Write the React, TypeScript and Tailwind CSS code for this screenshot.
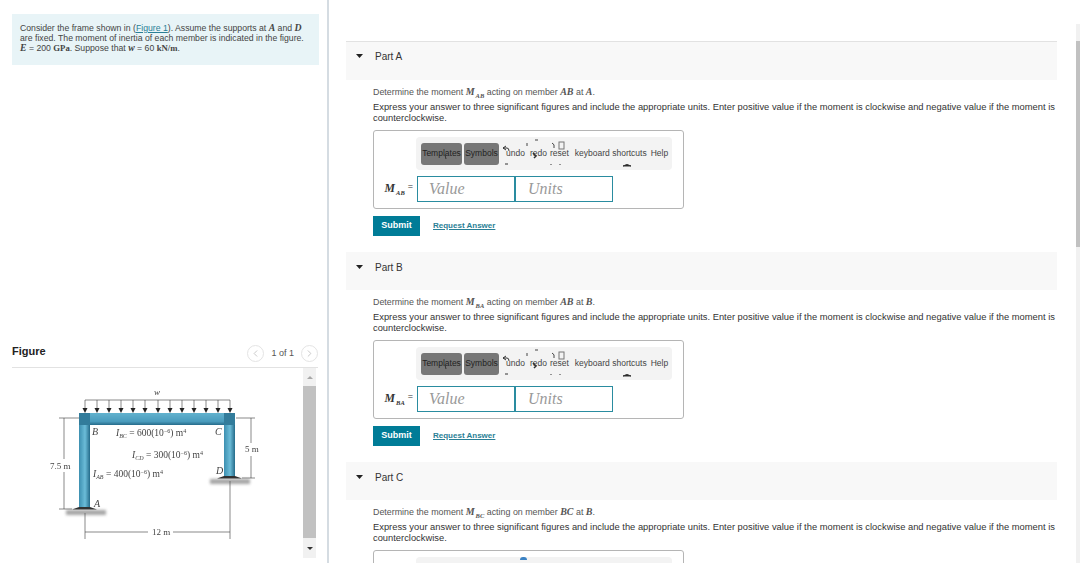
import { ChevronLeft, ChevronRight } from "lucide-react";
import type { ReactNode } from "react";

const Math = ({ children }: { children: ReactNode }) => (
  <span className="font-['Liberation_Serif',serif] text-[1.12em] font-bold italic">{children}</span>
);

const Moment = ({ sub }: { sub: string }) => (
  <Math>
    M<sub className="ml-[1px] text-[6.5px] leading-none align-[-1px]">{sub}</sub>
  </Math>
);

const Caret = () => (
  <svg width="7" height="4" viewBox="0 0 7 4" className="shrink-0">
    <path d="M0 0h7L3.5 4z" fill="#222" />
  </svg>
);

const Toolbar = () => (
  <div className="relative ml-[42px] flex h-[33px] w-[256px] items-center whitespace-nowrap rounded-[4px] bg-[#f3f3f3] pl-[5px] text-[8.5px] text-[#444]">
    <span className="flex h-[22px] w-[41px] items-center justify-center rounded-[3px] bg-[#777] text-[#222]">Templates</span>
    <span className="ml-[2px] flex h-[22px] w-[35px] items-center justify-center rounded-[3px] bg-[#777] text-[#222]">Symbols</span>
    <span className="ml-[7px]">undo</span>
    <span className="ml-[5px]">redo</span>
    <span className="ml-[3px]">reset</span>
    <span className="ml-[6px]">keyboard shortcuts</span>
    <span className="ml-[4px]">Help</span>
    {/* bits of the icon sprite that show through */}
    <svg width="256" height="33" viewBox="0 0 256 33" className="absolute left-0 top-0">
      <path d="M90 9l-3 2 3 2M87 11h4q2 0 2 3" fill="none" stroke="#333" strokeWidth="1" />
      <path d="M111 6v3M119 3h3M136 6q3 1 2 5" fill="none" stroke="#444" strokeWidth="1" />
      <rect x="143" y="5" width="5" height="7" fill="none" stroke="#777" strokeWidth="1" />
      <path d="M117 16l3 3-2 2" fill="none" stroke="#333" strokeWidth="1.5" />
      <path d="M29 18l1 4M89 27h3M135 27v1M144 27v1M207 29q4-3 8 0z" fill="#222" stroke="#333" strokeWidth="1" />
    </svg>
  </div>
);

const Answer = ({ sub }: { sub: string }) => (
  <div className="mt-[6px] flex items-center">
    <div className="flex w-[43px] justify-end pr-[4px] text-[10.5px] text-[#333]">
      <Moment sub={sub} />
      <span className="ml-[3px] text-[9px]">=</span>
    </div>
    <div className="flex h-[26px] w-[98px] items-center border border-[#2a8ca0] pl-[11px] font-['Liberation_Serif',serif] text-[16px] italic text-[#999]">Value</div>
    <div className="flex h-[26px] w-[98px] items-center border border-[#2a8ca0] pl-[12px] font-['Liberation_Serif',serif] text-[16px] italic text-[#999]">Units</div>
  </div>
);

type PartProps = { name: string; sub: string; member: string; at: string; first?: boolean; cut?: boolean };

const Part = ({ name, sub, member, at, first, cut }: PartProps) => (
  <section className="h-[210px] shrink-0">
    <div className={`flex h-[38px] items-start gap-[12px] bg-[#f8f8f8] pl-[10px] text-[10px] leading-[11px] text-[#333] ${first ? "pt-[9px]" : "pt-[10px]"}`}>
      <span className="pt-[3px]"><Caret /></span>
      {name}
    </div>
    <div className="pl-[27px]">
      <p className="mt-[6px] h-[12px] whitespace-nowrap text-[8.9px] leading-[12px] text-[#555]">
        Determine the moment <Moment sub={sub} /> acting on member <Math>{member}</Math> at <Math>{at}</Math>.
      </p>
      <p className="mt-[4px] w-[686px] text-[9.35px] leading-[11px] text-[#333]">
        Express your answer to three significant figures and include the appropriate units. Enter positive value if the moment is clockwise and negative value if the moment is counterclockwise.
      </p>
      <div className="mt-[6px] h-[79px] w-[311px] rounded-[3px] border border-[#b5b5b5] pt-[6px]">
        {cut ? (
          <div className="relative ml-[42px] h-[33px] w-[256px] rounded-[4px] bg-[#f3f3f3]">
            <span className="absolute left-[104px] top-0 h-[3px] w-[7px] rounded-t-full bg-[#3b82c4]" />
          </div>
        ) : (
          <>
            <Toolbar />
            <Answer sub={sub} />
          </>
        )}
      </div>
      {!cut && (
        <div className="mt-[7px] flex items-center gap-[13px]">
          <button className="h-[20px] w-[47px] bg-[#007c97] text-[9px] font-bold text-white">Submit</button>
          <a className="text-[8px] font-bold text-[#2a7f96] underline">Request Answer</a>
        </div>
      )}
    </div>
  </section>
);

const arrows = [45, 57, 69, 81, 93, 105, 118, 130, 142, 154, 166, 178, 190];

const Inertia = ({ x, y, sub, value }: { x: number; y: number; sub: string; value: string }) => (
  <text x={x} y={y} fontSize="9.5">
    <tspan fontStyle="italic">I</tspan>
    <tspan fontSize="6" dy="1.5" fontStyle="italic">{sub}</tspan>
    <tspan dy="-1.5"> = {value}(10</tspan>
    <tspan fontSize="6" dy="-3">−6</tspan>
    <tspan dy="3">) m</tspan>
    <tspan fontSize="6" dy="-3">4</tspan>
  </text>
);

const FrameFigure = () => (
  <svg width="240" height="170" viewBox="0 0 240 170" className="font-['Liberation_Serif',serif]">
    <defs>
      <linearGradient id="col" x1="0" x2="1" y1="0" y2="0">
        <stop offset="0" stopColor="#3d8fb0" />
        <stop offset="0.55" stopColor="#6bbcd8" />
        <stop offset="1" stopColor="#256b8a" />
      </linearGradient>
      <linearGradient id="beam" x1="0" x2="0" y1="0" y2="1">
        <stop offset="0" stopColor="#62b2ce" />
        <stop offset="0.7" stopColor="#4b9cbd" />
        <stop offset="1" stopColor="#256b8a" />
      </linearGradient>
      <filter id="soft"><feGaussianBlur stdDeviation="0.4" /></filter>
      <filter id="softer" x="-20%" y="-100%" width="140%" height="300%"><feGaussianBlur stdDeviation="1.6" /></filter>
    </defs>
    <g filter="url(#softer)" fill="#a5a5a5">
      <rect x="26" y="129" width="40" height="5" />
      <rect x="170" y="98" width="40" height="5" />
    </g>
    <g filter="url(#soft)">
      <rect x="39" y="44" width="11" height="83" fill="url(#col)" />
      <rect x="184" y="44" width="11" height="51" fill="url(#col)" />
      <rect x="39" y="32" width="156" height="12" fill="url(#beam)" />
      <rect x="39" y="32" width="11" height="12" fill="#327b9b" />
      <rect x="184" y="32" width="11" height="12" fill="#327b9b" />
      <path d="M32 128.500l7-2.500h11l7 2.500zM177 97.500l7-2.500h11l7 2.500z" fill="#333" />
      <g stroke="#555" strokeWidth="0.7" fill="none">
        <path d="M45 19H190M19 37H39M24 37V78M24 91V128M19 128H32M196 37H215M211 37V62M211 75V97M202 97H215" />
        <path d="M45 132V158M190 100V158M45 151H108M133 151H190" />
        {arrows.map((x) => (
          <path key={x} d="M0 19V30" transform={`translate(${x} 0)`} />
        ))}
      </g>
      {arrows.map((x) => (
        <path key={x} d="M-2.500 27H2.500L0 32z" transform={`translate(${x} 0)`} fill="#222" />
      ))}
      <g fill="#444" fontSize="9">
        <text x="114" y="14" fontStyle="italic">w</text>
        <text x="10" y="88">7.5 m</text>
        <text x="205" y="71">5 m</text>
        <text x="112" y="154">12 m</text>
        <g fontStyle="italic" fontSize="10">
          <text x="52" y="54">B</text>
          <text x="175" y="54">C</text>
          <text x="54" y="126">A</text>
          <text x="176" y="93">D</text>
        </g>
        <Inertia x={76} y={55} sub="BC" value="600" />
        <Inertia x={92} y={77} sub="CD" value="300" />
        <Inertia x={53} y={96} sub="AB" value="400" />
      </g>
    </g>
  </svg>
);

const PagerButton = ({ children }: { children: ReactNode }) => (
  <span className="flex h-[17px] w-[17px] items-center justify-center rounded-full border border-[#e4e4e4] text-[#c4c4c4]">
    {children}
  </span>
);

export default function App() {
  return (
    <div className="relative flex h-[563px] w-[1080px] overflow-hidden bg-white font-['Liberation_Sans',sans-serif]">
      {/* Left column */}
      <aside className="flex w-[329px] shrink-0 flex-col border-r-2 border-[#d5dce2] pt-[14px]">
        <div className="ml-[12px] h-[51px] w-[307px] bg-[#e8f4f7] pl-[8px] pt-[9px] text-[8.7px] leading-[10px] text-[#444]">
          <p className="w-[290px]">
            Consider the frame shown in (<a className="text-[#2a7f96] underline">Figure 1</a>). Assume the supports at <Math>A</Math> and <Math>D</Math> are fixed. The moment of inertia of each member is indicated in the figure. <Math>E</Math> = 200 <span className="font-['Liberation_Serif',serif] font-bold">GPa</span>. Suppose that <Math>w</Math> = 60 <span className="font-['Liberation_Serif',serif] font-bold">kN/m</span>.
          </p>
        </div>
        <div className="mt-[280px] ml-[12px] w-[306px]">
          <div className="flex h-[23px] items-start border-b border-[#e2e2e2]">
            <h2 className="text-[11px] font-bold leading-[12px] text-[#222]">Figure</h2>
            <div className="ml-auto flex items-center gap-[7px] text-[9px] text-[#555]">
              <PagerButton><ChevronLeft size={11} /></PagerButton>
              <span>1 of 1</span>
              <PagerButton><ChevronRight size={11} /></PagerButton>
            </div>
          </div>
          <div className="flex h-[190px]">
            <div className="w-[291px] pl-[28px] pt-[13px]">
              <FrameFigure />
            </div>
            <div className="flex w-[13px] flex-col items-center bg-[#f1f1f1]">
              <svg width="8" height="18" viewBox="0 0 8 18"><path d="M1 11L4 8l3 3z" fill="#a8a8a8" /></svg>
              <div className="w-full flex-1 bg-[#c1c1c1]" />
              <svg width="8" height="20" viewBox="0 0 8 20"><path d="M1 9h6l-3 3z" fill="#333" /></svg>
            </div>
          </div>
        </div>
      </aside>

      {/* Right column */}
      <main className="ml-[17px] flex w-[711px] flex-col pt-[41px]">
        <div className="h-px shrink-0 bg-[#e2e2e2]" />
        <Part name="Part A" sub="AB" member="AB" at="A" first />
        <Part name="Part B" sub="BA" member="AB" at="B" />
        <Part name="Part C" sub="BC" member="BC" at="B" cut />
      </main>

      {/* Page scrollbar */}
      <div className="absolute right-0 top-[24px] h-[539px] w-[4px] bg-[#f1f1f1]">
        <div className="mt-[17px] h-[206px] w-full bg-[#c1c1c1]" />
      </div>
    </div>
  );
}
